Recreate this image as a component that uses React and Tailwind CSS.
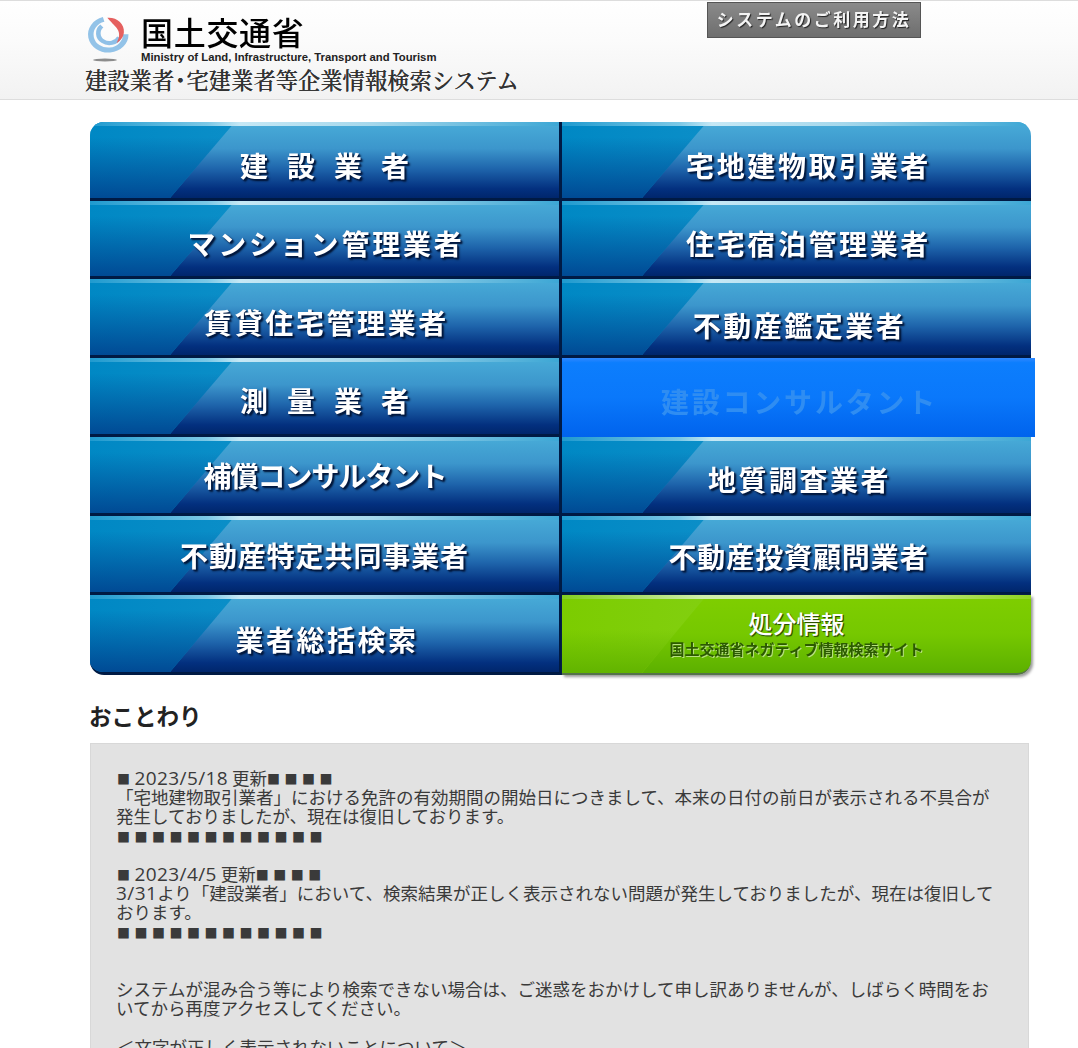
const jp = "font-['Noto_Sans_CJK_JP',sans-serif]";

const leftCol = [
  { label: "建設業者", cls: "tracking-[19px] pl-[19px] pt-[9px]", h: "h-[79px]", round: "rounded-tl-[14px]" },
  { label: "マンション管理業者", cls: "tracking-[2.8px] pl-[3px] pt-[9px]", h: "h-[78px]" },
  { label: "賃貸住宅管理業者", cls: "tracking-[2.6px] pl-[4px] pt-[9px]", h: "h-[79px]" },
  { label: "測量業者", cls: "tracking-[19px] pl-[19px] pt-[7px]", h: "h-[79px]" },
  { label: "補償コンサルタント", cls: "tracking-[-1px] pl-[1px] pt-0", h: "h-[79px]" },
  { label: "不動産特定共同事業者", cls: "tracking-[0.9px] pt-[1px]", h: "h-[79px]" },
  { label: "業者総括検索", cls: "tracking-[2.5px] pl-[5px] pt-[11px]", h: "h-[80px]", round: "rounded-bl-[14px]" },
];

const rightCol = [
  { label: "宅地建物取引業者", cls: "tracking-[2.6px] pl-[24px] pt-[9px]", h: "h-[79px]", round: "rounded-tr-[14px]" },
  { label: "住宅宿泊管理業者", cls: "tracking-[2.6px] pl-[24px] pt-[9px]", h: "h-[78px]" },
  { label: "不動産鑑定業者", cls: "tracking-[2.5px] pl-[6px] pt-[15px]", h: "h-[79px]" },
  { label: "建設コンサルタント", active: true, h: "h-[79px]" },
  { label: "地質調査業者", cls: "tracking-[2.5px] pl-[6px] pt-[7px]", h: "h-[79px]" },
  { label: "不動産投資顧問業者", cls: "tracking-[0.9px] pl-[4px] pt-[3px]", h: "h-[79px]" },
];

function Logo() {
  return (
    <svg width="44" height="50" viewBox="0 0 44 50" className="shrink-0">
      <g transform="translate(3 2) scale(0.92 0.82)">
        <path d="M17 3A19 19 0 1 0 41 21" fill="none" stroke="#93c3e8" strokeWidth="6" />
        <path d="M15 11A12 12 0 1 0 34 25" fill="none" stroke="#8fc0e7" strokeWidth="5" />
        <path d="M21 1C31 0 40 8 39 19 38.500 25 35 29 31 32 34 26 35 20 32 15 30 11 27 9 21 1z" fill="#e5605f" />
      </g>
      <ellipse cx="20" cy="45" rx="12" ry="1.500" fill="#8c8c8c" />
    </svg>
  );
}

function NavCell({ item }) {
  if (item.active) {
    return (
      <div className={`${item.h} flex w-[473px] items-center justify-center bg-[linear-gradient(180deg,#3088ff_0%,#0c7efd_6%,#0a78fb_50%,#0063ed_100%)]`}>
        <span className={`${jp} pl-[2px] pt-[7px] text-[28px] font-bold tracking-[2.8px] text-[#2f8df2] blur-[0.4px]`}>{item.label}</span>
      </div>
    );
  }
  return (
    <div className={`${item.h} ${item.round || ""} relative w-[469px] overflow-hidden border-b-[3px] border-[#001a44] bg-[linear-gradient(180deg,#48acd8_0%,#3c96cc_35%,#1e64ab_62%,#03307f_88%,#00266c_100%)]`}>
      <div className="absolute inset-0 bg-[linear-gradient(90deg,#0088c4_0%,#0e90c9_40%,#4ab0da_100%)] [clip-path:polygon(0_0,145px_0,80px_100%,0_100%)]" />
      <div className="absolute inset-0 bg-[linear-gradient(180deg,transparent_20%,#00438f_100%)] opacity-90 [clip-path:polygon(0_0,145px_0,80px_100%,0_100%)]" />
      <div className="absolute inset-x-0 top-0 h-[4px] bg-[linear-gradient(90deg,#1f9acf_0%,#7cc8e6_25%,#c6e8f5_32%,#a6d8ec_60%,#3da7d5_100%)]" />
      <div className="relative flex h-full items-center justify-center">
        <span className={`${jp} whitespace-nowrap text-[28px] font-bold text-white blur-[0.35px] [text-shadow:1px_1px_1px_#001a44,2px_2px_2px_#00102c] ${item.cls}`}>{item.label}</span>
      </div>
    </div>
  );
}

function GreenCell() {
  return (
    <div className="relative h-[80px] w-[469px] overflow-hidden rounded-br-[14px] border-b-2 border-[#55724a] bg-[linear-gradient(180deg,#7fce00_0%,#76c800_50%,#5cb000_100%)] shadow-[2px_2px_3px_#9a9a9a]">
      <div className="absolute inset-0 bg-[linear-gradient(90deg,#7ccc00_0%,#84d014_40%,#b4e268_100%)] [clip-path:polygon(0_0,145px_0,80px_100%,0_100%)]" />
      <div className="absolute inset-0 bg-[linear-gradient(180deg,transparent_45%,#62b400_100%)] [clip-path:polygon(0_0,145px_0,80px_100%,0_100%)]" />
      <div className="absolute inset-x-0 top-0 h-[4px] bg-[linear-gradient(90deg,#82cf20_0%,#cfeeaa_30%,#d8f0b8_60%,#90d420_100%)]" />
      <div className={`${jp} relative flex h-full flex-col items-center pt-[10px]`}>
        <span className="text-[24px] font-medium leading-[36px] text-white [text-shadow:1px_1px_1px_#2c5000,1px_1px_0_#3c6a00]">処分情報</span>
        <span className="text-[15px] font-bold leading-[16px] text-[#2b5a00] blur-[0.3px] [text-shadow:1px_1px_0_#b8e080]">国土交通省ネガティブ情報検索サイト</span>
      </div>
    </div>
  );
}

function Squares({ children }) {
  return <span className="align-[1px] text-[13px] leading-[0px] tracking-[4.5px]">{children}</span>;
}

function Num({ children }) {
  return <span className="font-['Open_Sans',sans-serif] text-[19px] leading-[0px] tracking-[0.4px]">{children}</span>;
}

export default function App() {
  return (
    <div className={`${jp} h-[1048px] overflow-hidden bg-white`}>
      <header className="relative h-[100px] border-y border-[#dddddd] bg-[linear-gradient(180deg,#ffffff_0%,#fbfbfb_40%,#f2f2f2_100%)] pl-[85px] pt-[11px]">
        <div className="flex gap-[12px]">
          <div className="pt-[3px]"><Logo /></div>
          <div>
            <div className="text-[32px] font-medium leading-[39px] tracking-[0.7px] text-black blur-[0.3px]">国土交通省</div>
            <div className="whitespace-nowrap font-['Liberation_Sans',sans-serif] text-[11.3px] font-bold leading-[12px] text-[#222222]">Ministry of Land, Infrastructure, Transport and Tourism</div>
          </div>
        </div>
        <div className="mt-[1px] whitespace-nowrap font-['Noto_Serif_CJK_JP','Noto_Sans_CJK_JP',serif] text-[22.3px] font-medium leading-[26px] text-[#333333] [text-shadow:0_0_0.6px_#333333]">
          建設業者<span className="-mx-[5px]">・</span>宅建業者等企業情報検索システム
        </div>
        <div className="absolute left-[707px] top-[1px] flex h-[36px] w-[214px] items-center justify-center border border-[#555555] bg-[linear-gradient(180deg,#8a8a8a_0%,#6e6e6e_100%)] pb-[3px] text-[17px] font-bold tracking-[2.5px] text-[#f4f4f4] blur-[0.3px] [text-shadow:1px_1px_1px_#222222]">
          システムのご利用方法
        </div>
      </header>

      <main className="pl-[90px]">
        <nav className="mt-[22px] flex w-[945px]">
          <div className="flex w-[469px] flex-col">
            {leftCol.map((item) => (
              <NavCell key={item.label} item={item} />
            ))}
          </div>
          <div className="h-[553px] w-[3px] bg-[#001a44]" />
          <div className="flex flex-col">
            {rightCol.map((item) => (
              <NavCell key={item.label} item={item} />
            ))}
            <GreenCell />
          </div>
        </nav>

        <h2 className="-ml-[1px] mt-[24px] text-[22.5px] font-bold leading-[32px] text-[#222222]">おことわり</h2>

        <section className="mt-[12px] h-[400px] w-[939px] border border-[#d8d8d8] bg-[#e2e2e2] px-[25px] pt-[24px] text-[17.5px] leading-[19.2px] text-[#3a3a3a]">
          <p className="pl-[1px]"><Squares>■</Squares><Num>2023/5/18</Num> 更新<Squares>■■■■</Squares></p>
          <p>「宅地建物取引業者」における免許の有効期間の開始日につきまして、本来の日付の前日が表示される不具合が発生しておりましたが、現在は復旧しております。</p>
          <p className="pl-[1px]"><Squares>■■■■■■■■■■■■</Squares></p>
          <p>&nbsp;</p>
          <p className="pl-[1px]"><Squares>■</Squares><Num>2023/4/5</Num> 更新<Squares>■■■■</Squares></p>
          <p><Num>3/31</Num>より「建設業者」において、検索結果が正しく表示されない問題が発生しておりましたが、現在は復旧しております。</p>
          <p className="pl-[1px]"><Squares>■■■■■■■■■■■■</Squares></p>
          <p>&nbsp;</p>
          <p>&nbsp;</p>
          <p>システムが混み合う等により検索できない場合は、ご迷惑をおかけして申し訳ありませんが、しばらく時間をおいてから再度アクセスしてください。</p>
          <p>&nbsp;</p>
          <p className="pl-[1px]">＜文字が正しく表示されないことについて＞</p>
        </section>
      </main>
    </div>
  );
}
